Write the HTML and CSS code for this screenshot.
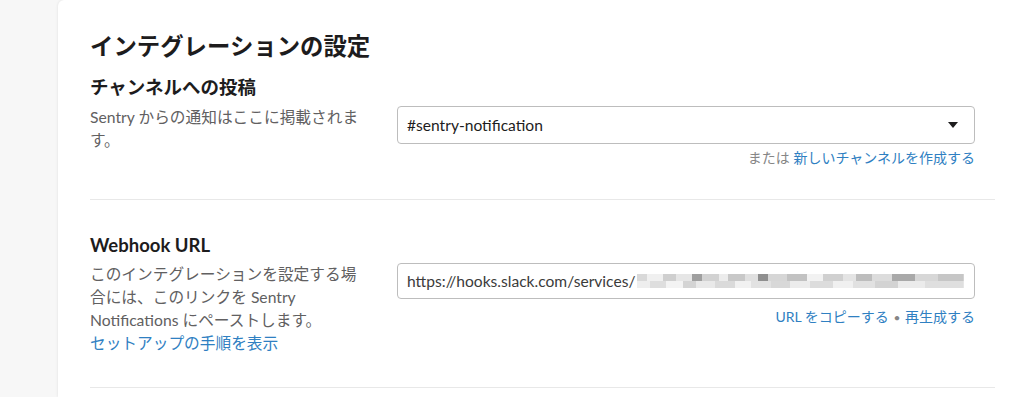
FILE: index.html
```html
<!DOCTYPE html>
<html lang="ja">
<head>
    <meta charset="UTF-8">
    <meta name="viewport" content="width=device-width, initial-scale=1.0">
    <title>インテグレーションの設定</title>
    <link rel="stylesheet" href="styles.css">
</head>
<body>
    <div class="card">
        <h1 class="page-title">インテグレーションの設定</h1>

        <section class="setting">
            <h2>チャンネルへの投稿</h2>
            <div class="setting-row">
                <p class="desc">Sentry からの通知はここに掲載されます。</p>
                <div class="control">
                    <div class="select">
                        <span>#sentry-notification</span>
                        <span class="caret"></span>
                    </div>
                    <div class="hint">
                        <span class="muted">または</span> <a href="#">新しいチャンネルを作成する</a>
                    </div>
                </div>
            </div>
        </section>

        <section class="setting">
            <h2>Webhook URL</h2>
            <div class="setting-row">
                <div class="desc">
                    <p>このインテグレーションを設定する場合には、このリンクを Sentry Notifications にペーストします。</p>
                    <a href="#">セットアップの手順を表示</a>
                </div>
                <div class="control">
                    <div class="text-input">
                        <span>https://hooks.slack.com/services/</span>
                        <span class="redacted"></span>
                    </div>
                    <div class="hint hint-url">
                        <a href="#">URL をコピーする</a>
                        <span class="dot">•</span>
                        <a href="#">再生成する</a>
                    </div>
                </div>
            </div>
        </section>
    </div>
</body>
</html>
```

FILE: styles.css
```css
* {
    margin: 0;
    padding: 0;
    box-sizing: border-box;
}

body {
    background: #f7f7f7;
    font-family: "Lato", "Noto Sans CJK JP", sans-serif;
    color: #1d1c1d;
    padding-left: 58px;
    height: 397px;
    overflow: hidden;
}

.card {
    background: #fff;
    border-radius: 6px 0 0 0;
    box-shadow: 0 0 3px rgba(0, 0, 0, 0.1);
    padding: 31px 29px 0 32px;
    min-height: 397px;
}

.page-title {
    font-size: 23.4px;
    line-height: 30px;
    font-weight: 700;
    margin-bottom: 13px;
}

.setting {
    border-bottom: 1px solid #e8e8e8;
    padding-bottom: 31px;
}

.setting + .setting {
    padding-top: 32px;
    padding-bottom: 32px;
}

.setting h2 {
    font-size: 18.5px;
    line-height: 26px;
    font-weight: 700;
    margin-bottom: 6px;
}

.setting + .setting h2 {
    margin-bottom: 5px;
}

.setting-row {
    display: grid;
    grid-template-columns: 280px 1fr;
    column-gap: 27px;
}

.desc {
    font-size: 15.7px;
    line-height: 23px;
    color: #616061;
}

a {
    color: #2f80c2;
    text-decoration: none;
}

.control {
    padding-right: 20px;
}

.select,
.text-input {
    display: flex;
    align-items: center;
    border: 1px solid #bdbdbd;
    border-radius: 4px;
    font-size: 15.6px;
    color: #1d1c1d;
    padding: 0 9px;
}

.select {
    height: 38px;
    justify-content: space-between;
}

.caret {
    width: 0;
    height: 0;
    border-left: 5px solid transparent;
    border-right: 5px solid transparent;
    border-top: 6px solid #1d1c1d;
    margin-right: 7px;
}

.text-input {
    height: 36px;
    color: #3b3b3b;
}

.redacted {
    flex: 1;
    height: 14px;
    margin-left: 2px;
    margin-right: 1px;
    background:
        linear-gradient(90deg,
            #d9d9d9 0 3%, #f0f0f0 3% 8%, #cfcfcf 8% 12%, #e6e6e6 12% 17%,
            #9f9f9f 17% 20%, #d2d2d2 20% 25%, #ececec 25% 28%, #c8c8c8 28% 33%,
            #e0e0e0 33% 37%, #8f8f8f 37% 40%, #d6d6d6 40% 46%, #c2c2c2 46% 52%,
            #f2f2f2 52% 57%, #d0d0d0 57% 63%, #e4e4e4 63% 67%, #bdbdbd 67% 72%,
            #dcdcdc 72% 78%, #a9a9a9 78% 85%, #d7d7d7 85% 92%, #c6c6c6 92% 100%)
            top / 100% 50% no-repeat,
        linear-gradient(90deg,
            #eeeeee 0 4%, #dedede 4% 9%, #f3f3f3 9% 14%, #d4d4d4 14% 18%,
            #e9e9e9 18% 24%, #dadada 24% 30%, #f1f1f1 30% 35%, #e2e2e2 35% 41%,
            #d8d8d8 41% 47%, #ececec 47% 53%, #dcdcdc 53% 60%, #f0f0f0 60% 66%,
            #e1e1e1 66% 73%, #d3d3d3 73% 80%, #ebebeb 80% 88%, #dfdfdf 88% 100%)
            bottom / 100% 50% no-repeat;
}

.hint {
    text-align: right;
    font-size: 14px;
    line-height: 20px;
    margin-top: 4px;
}

.hint-url {
    margin-top: 8px;
}

.muted {
    color: #868686;
}

.dot {
    color: #868686;
    font-size: 12px;
    margin: 0 1px;
}
```
